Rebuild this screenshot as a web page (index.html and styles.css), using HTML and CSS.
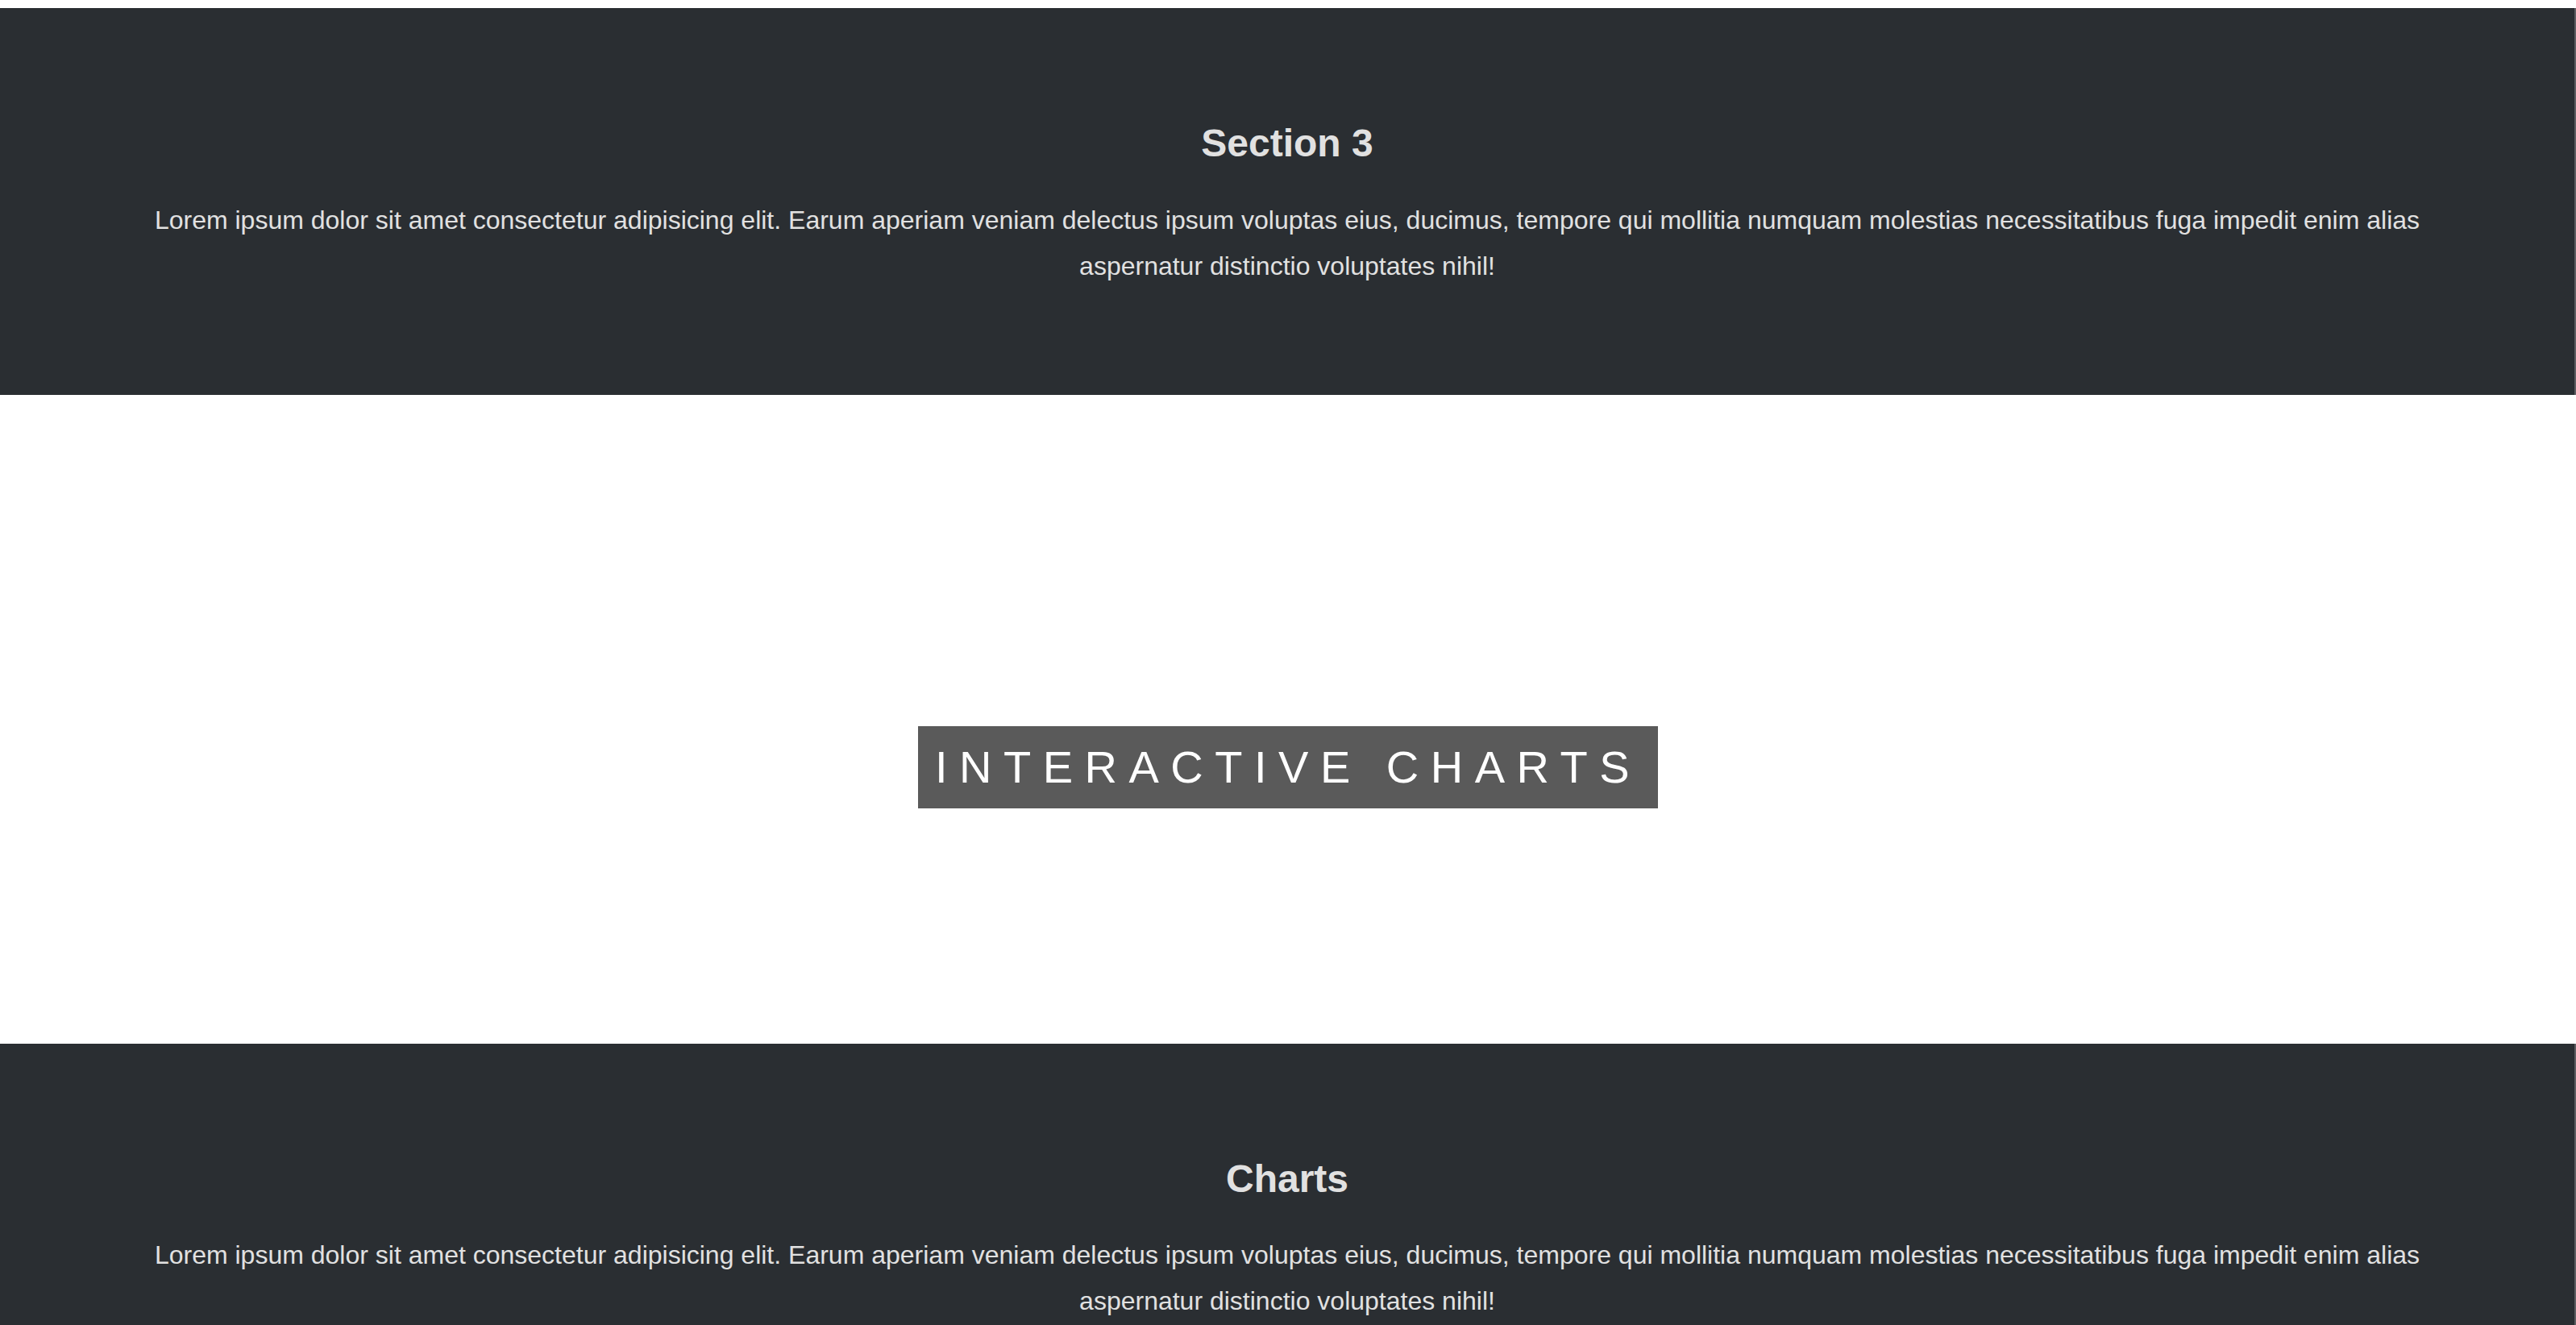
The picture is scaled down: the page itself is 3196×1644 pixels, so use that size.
FILE: index.html
```html
<!DOCTYPE html>
<html lang="en">
<head>
<meta charset="utf-8">
<title>Interactive Charts</title>
<link rel="stylesheet" href="styles.css">
</head>
<body>
  <div class="top-gap"></div>
  <section class="dark-section">
    <h2 class="section-title">Section 3</h2>
    <p class="section-text">Lorem ipsum dolor sit amet consectetur adipisicing elit. Earum aperiam veniam delectus ipsum voluptas eius, ducimus, tempore qui mollitia numquam molestias necessitatibus fuga impedit enim alias aspernatur distinctio voluptates nihil!</p>
  </section>
  <section class="banner">
    <span class="banner-label">INTERACTIVE CHARTS</span>
  </section>
  <section class="dark-section">
    <h2 class="section-title">Charts</h2>
    <p class="section-text">Lorem ipsum dolor sit amet consectetur adipisicing elit. Earum aperiam veniam delectus ipsum voluptas eius, ducimus, tempore qui mollitia numquam molestias necessitatibus fuga impedit enim alias aspernatur distinctio voluptates nihil!</p>
  </section>
</body>
</html>
```

FILE: styles.css
```css
html, body {
  margin: 0;
  padding: 0;
  background: #ffffff;
}

body {
  font-family: "Liberation Sans", Arial, Helvetica, sans-serif;
}

.top-gap {
  height: 10px;
}

.dark-section {
  background: #2a2e32;
  color: #e1e1e1;
  text-align: center;
  padding: 139px 150px 131px;
  border-right: 2px solid #5c5d61;
}

.section-title {
  margin: 0;
  font-size: 48px;
  line-height: 57.6px;
  font-weight: 700;
}

.section-text {
  margin: 38px 0 0;
  font-size: 32px;
  line-height: 57px;
  font-weight: 400;
}

.banner {
  text-align: center;
  padding: 411px 0 292px;
}

.banner-label {
  display: inline-block;
  background: #5a5a5a;
  color: #ffffff;
  font-size: 56px;
  line-height: 62px;
  letter-spacing: 14.5px;
  padding: 20px 21px;
  font-weight: 400;
}
```
